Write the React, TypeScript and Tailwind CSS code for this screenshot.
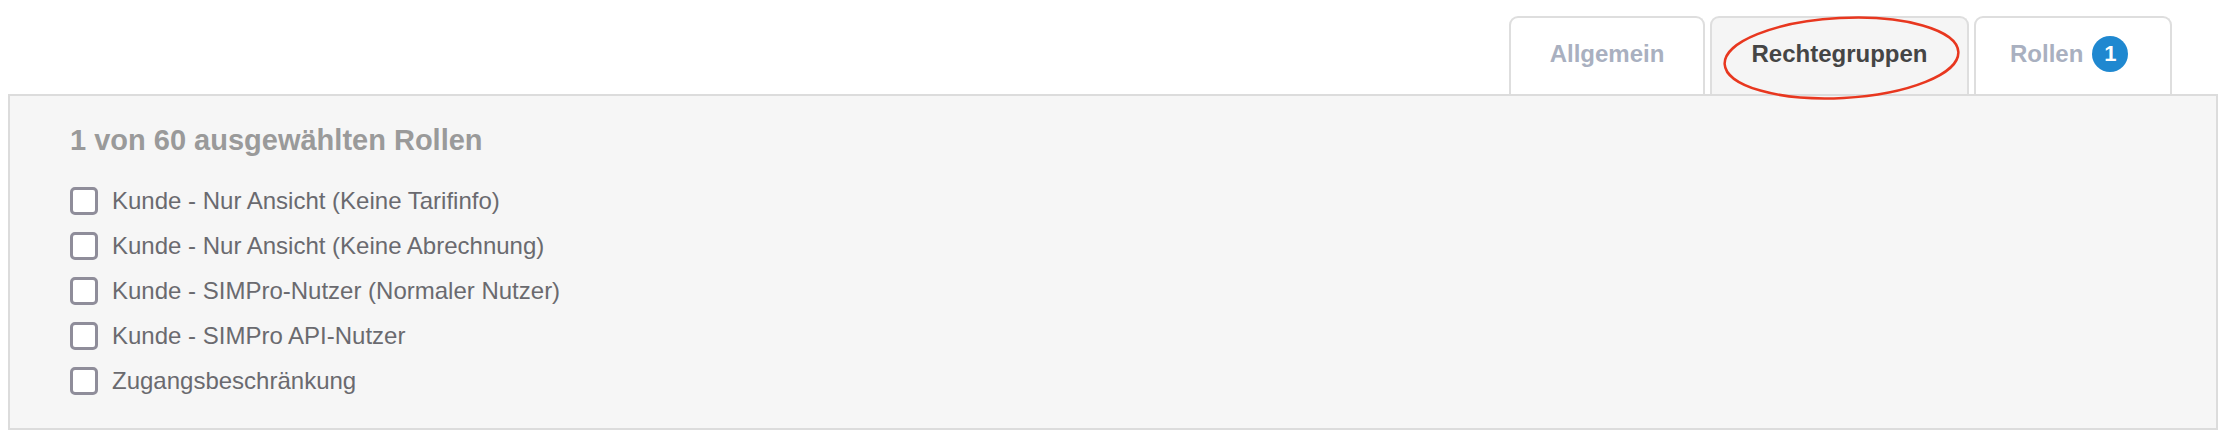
import React, { useState } from "react";

const roles = [
  "Kunde - Nur Ansicht (Keine Tarifinfo)",
  "Kunde - Nur Ansicht (Keine Abrechnung)",
  "Kunde - SIMPro-Nutzer (Normaler Nutzer)",
  "Kunde - SIMPro API-Nutzer",
  "Zugangsbeschränkung",
];

const App = () => {
  const [checked, setChecked] = useState<boolean[]>(roles.map(() => false));

  const toggle = (i: number) =>
    setChecked((prev) => prev.map((v, idx) => (idx === i ? !v : v)));

  return (
    <div
      className="w-[2222px] h-[434px] bg-white pl-[8px] pr-[4px] pt-[16px]"
      style={{ fontFamily: '"Liberation Sans", Arial, sans-serif' }}
    >
      {/* tabs */}
      <div className="flex justify-end gap-[5px] pr-[46px]">
        <div className="w-[196px] h-[78px] flex items-center justify-center pb-[5px] bg-white border-2 border-b-0 border-[#dedede] rounded-t-[9px]">
          <span className="text-[24px] font-bold text-[#a9b0c0]">Allgemein</span>
        </div>
        <div className="relative w-[259px] h-[78px] flex items-center justify-center pb-[5px] bg-[#f5f5f5] border-2 border-b-0 border-[#dedede] rounded-t-[9px]">
          <span className="text-[24px] font-bold text-[#454545]">Rechtegruppen</span>
          <svg
            className="absolute left-[10px] top-[-3px] pointer-events-none overflow-visible"
            width="239"
            height="86"
            viewBox="0 0 239 86"
          >
            <ellipse
              cx="119.5"
              cy="43"
              rx="117"
              ry="40"
              fill="none"
              stroke="#e8371f"
              strokeWidth="2.5"
              transform="rotate(-3 119.5 43)"
            />
          </svg>
        </div>
        <div className="w-[198px] h-[78px] flex items-center pl-[34px] pb-[5px] bg-white border-2 border-b-0 border-[#dedede] rounded-t-[9px]">
          <span className="text-[24px] font-bold text-[#a9b0c0]">Rollen</span>
          <span className="ml-[9px] w-[36px] h-[36px] rounded-full bg-[#1f88d0] text-white text-[22px] font-bold flex items-center justify-center">
            1
          </span>
        </div>
      </div>

      {/* panel */}
      <div className="h-[336px] bg-[#f6f6f6] border-2 border-[#dcdcdc] pl-[60px] pt-[28px]">
        <h2 className="text-[29px] leading-[32px] font-bold text-[#9a9a9a]">
          1 von 60 ausgewählten Rollen
        </h2>
        <div className="mt-[22px] flex flex-col">
          {roles.map((r, i) => (
            <label
              key={r}
              className="h-[45px] flex items-center gap-[14px] cursor-pointer"
              onClick={() => toggle(i)}
            >
              <span className="w-[28px] h-[28px] bg-white border-[3px] border-[#8f8d9a] rounded-[5px] flex items-center justify-center">
                {checked[i] && <span className="w-[14px] h-[14px] bg-[#1f88d0] rounded-[2px]" />}
              </span>
              <span className="text-[24px] text-[#6a6a6f]">{r}</span>
            </label>
          ))}
        </div>
      </div>
    </div>
  );
};

export default App;
